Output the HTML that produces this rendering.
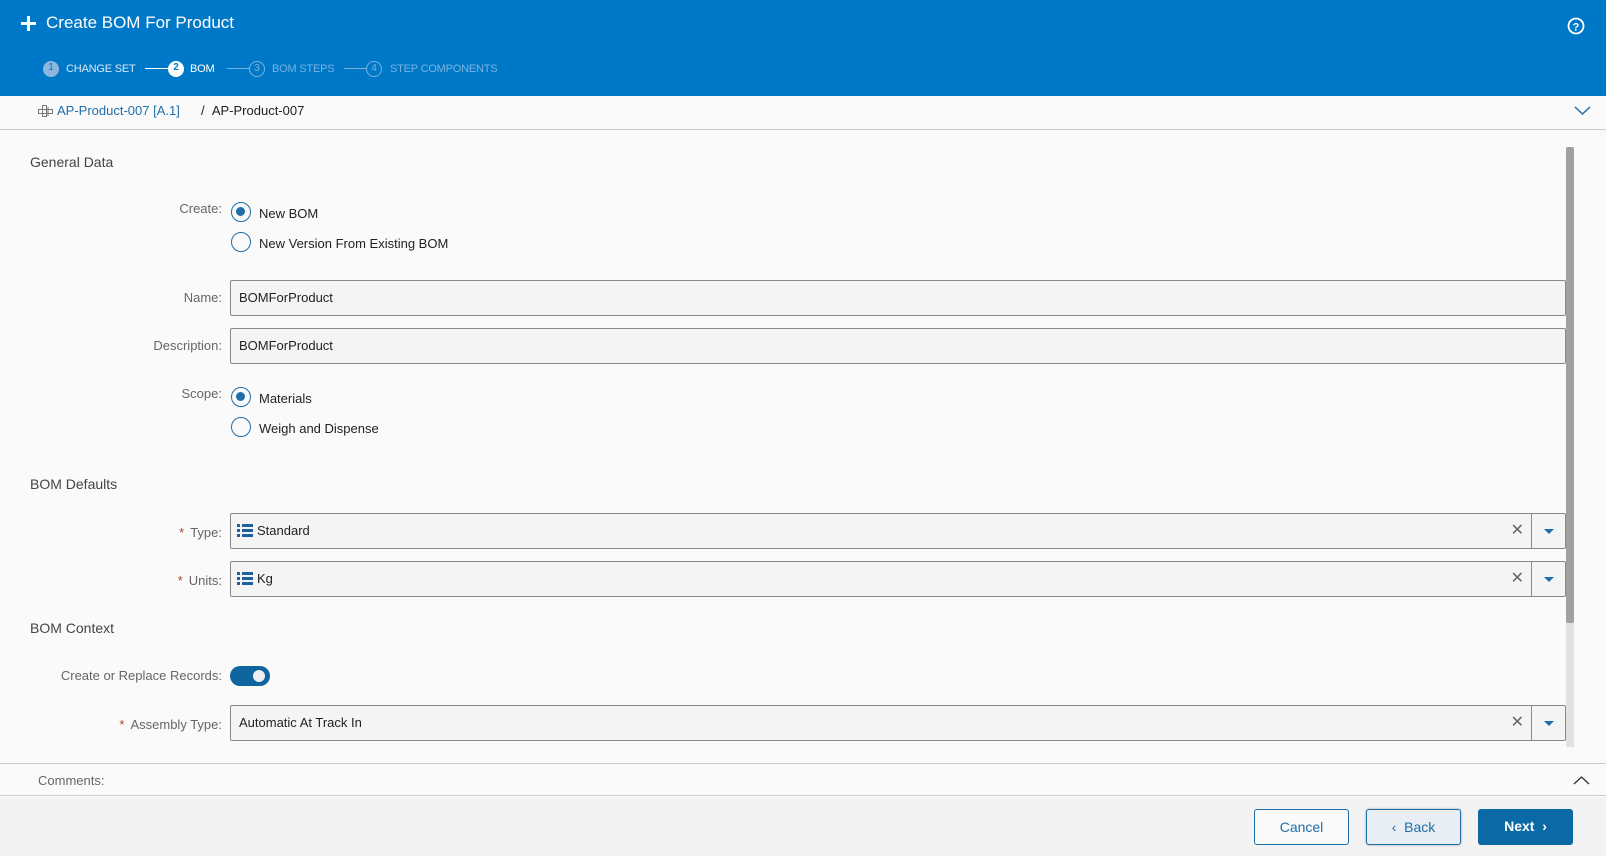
<!DOCTYPE html>
<html><head><meta charset="utf-8"><style>
*{box-sizing:border-box;margin:0;padding:0}
body{width:1606px;height:856px;overflow:hidden;background:#fafafa;font-family:"Liberation Sans",sans-serif;color:#333;position:relative}
.abs{position:absolute}
.hdr{left:0;top:0;width:1606px;height:96px;background:#0078c8;color:#fff}
.step{top:62px;font-size:11px;line-height:14px;white-space:nowrap;letter-spacing:-0.2px}
.circ{top:61px;width:16px;height:16px;border-radius:50%;font-size:10px;line-height:14px;text-align:center}
.ln{top:68px;height:1px}
.lbl{font-size:13px;color:#666;text-align:right;width:222px;left:0}
.sec{left:30px;font-size:14px;color:#444}
.inp{left:230px;width:1336px;height:36px;border:1px solid #8a8a8a;border-radius:2px;background:#f4f4f4;font-size:13px;color:#222;padding-left:8px;line-height:34px}
.radio{left:231px;width:20px;height:20px;border:1.5px solid #1f6ea8;border-radius:50%}
.radio.on::after{content:"";position:absolute;left:4px;top:4px;width:9px;height:9px;border-radius:50%;background:#1f6ea8}
.rt{left:259px;font-size:13px;color:#222}
.dd{position:absolute;right:0;top:0;width:34px;height:34px;border-left:1px solid #8a8a8a}
.dd::after{content:"";position:absolute;left:12px;top:15px;border-left:5px solid transparent;border-right:5px solid transparent;border-top:5px solid #1f6ea8}
.x{position:absolute;right:41px;top:0;font-size:16px;color:#666}
.req{color:#a0452a;margin-right:6px}
.btn{top:809px;width:95px;height:36px;border-radius:3px;font-size:14px;text-align:center;line-height:34px}
</style></head><body>
<div class="abs hdr">
 <div class="abs" style="left:21px;top:22px;width:15px;height:3px;background:#fff"></div>
 <div class="abs" style="left:27px;top:16px;width:3px;height:15px;background:#fff"></div>
 <div class="abs" style="left:46px;top:13px;font-size:17px">Create BOM For Product</div>
 <svg class="abs" style="left:1567px;top:17px" width="18" height="18" viewBox="0 0 18 18"><circle cx="9" cy="9" r="7.5" fill="none" stroke="#fff" stroke-width="1.8"/><text x="9" y="13.5" font-size="11" font-weight="bold" fill="#fff" text-anchor="middle" font-family="Liberation Sans">?</text></svg>
 <div class="abs circ" style="left:43px;background:#8fb6dc;color:#0078c8">1</div>
 <div class="abs step" style="left:66px;color:#d8e8f5">CHANGE SET</div>
 <div class="abs ln" style="left:145px;width:24px;background:#fff"></div>
 <div class="abs circ" style="left:168px;background:#fff;color:#0078c8;font-weight:bold">2</div>
 <div class="abs step" style="left:190px;color:#fff">BOM</div>
 <div class="abs ln" style="left:227px;width:22px;background:#79b2e0"></div>
 <div class="abs circ" style="left:249px;border:1px solid #79b2e0;color:#79b2e0">3</div>
 <div class="abs step" style="left:272px;color:#79b2e0">BOM STEPS</div>
 <div class="abs ln" style="left:344px;width:22px;background:#79b2e0"></div>
 <div class="abs circ" style="left:366px;border:1px solid #79b2e0;color:#79b2e0">4</div>
 <div class="abs step" style="left:390px;color:#79b2e0">STEP COMPONENTS</div>
</div>
<div class="abs" style="left:0;top:96px;width:1606px;height:34px;background:#fafafa;border-bottom:1px solid #ccc"></div>
<svg class="abs" style="left:37px;top:104px" width="17" height="14" viewBox="0 0 17 14"><g fill="none" stroke="#777" stroke-width="1"><rect x="1.5" y="5.5" width="14" height="4"/><rect x="5.5" y="1.5" width="4" height="11"/><line x1="11" y1="3" x2="11" y2="12"/></g></svg>
<div class="abs" style="left:57px;top:103px;font-size:13px;color:#1f6ea8">AP-Product-007 [A.1]</div>
<div class="abs" style="left:201px;top:103px;font-size:13px;color:#222">/&nbsp;&nbsp;AP-Product-007</div>
<svg class="abs" style="left:1574px;top:106px" width="17" height="10"><polyline points="1,1 8.5,8 16,1" fill="none" stroke="#1f6ea8" stroke-width="1.5"/></svg>
<div class="abs" style="left:1566px;top:147px;width:8px;height:600px;background:#e2e2e2"></div>
<div class="abs" style="left:1566px;top:147px;width:8px;height:476px;background:#a0a0a0;border-radius:2px"></div>

<div class="abs sec" style="top:154px">General Data</div>
<div class="abs lbl" style="top:201px">Create:</div>
<div class="abs radio on" style="top:202px"></div><div class="abs rt" style="top:206px">New BOM</div>
<div class="abs radio" style="top:232px"></div><div class="abs rt" style="top:236px">New Version From Existing BOM</div>
<div class="abs lbl" style="top:290px">Name:</div>
<div class="abs inp" style="top:280px">BOMForProduct</div>
<div class="abs lbl" style="top:338px">Description:</div>
<div class="abs inp" style="top:328px">BOMForProduct</div>
<div class="abs lbl" style="top:386px">Scope:</div>
<div class="abs radio on" style="top:387px"></div><div class="abs rt" style="top:391px">Materials</div>
<div class="abs radio" style="top:417px"></div><div class="abs rt" style="top:421px">Weigh and Dispense</div>

<div class="abs sec" style="top:476px">BOM Defaults</div>
<div class="abs lbl" style="top:525px"><span class="req">*</span>Type:</div>
<div class="abs inp" style="top:513px;padding-left:26px"><svg style="position:absolute;left:6px;top:10px" width="16" height="14"><g fill="#1f5fa0"><rect x="0" y="0" width="3" height="3"/><rect x="5" y="0" width="11" height="3"/><rect x="0" y="5" width="3" height="3"/><rect x="5" y="5" width="11" height="3"/><rect x="0" y="10" width="3" height="3"/><rect x="5" y="10" width="11" height="3"/></g></svg>Standard<span class="x">✕</span><span class="dd"></span></div>
<div class="abs lbl" style="top:573px"><span class="req">*</span>Units:</div>
<div class="abs inp" style="top:561px;padding-left:26px"><svg style="position:absolute;left:6px;top:10px" width="16" height="14"><g fill="#1f5fa0"><rect x="0" y="0" width="3" height="3"/><rect x="5" y="0" width="11" height="3"/><rect x="0" y="5" width="3" height="3"/><rect x="5" y="5" width="11" height="3"/><rect x="0" y="10" width="3" height="3"/><rect x="5" y="10" width="11" height="3"/></g></svg>Kg<span class="x">✕</span><span class="dd"></span></div>

<div class="abs sec" style="top:620px">BOM Context</div>
<div class="abs lbl" style="top:668px">Create or Replace Records:</div>
<div class="abs" style="left:230px;top:666px;width:40px;height:20px;border-radius:10px;background:#0f65a0"><div style="position:absolute;right:5px;top:4px;width:12px;height:12px;border-radius:50%;background:#f0f0f0"></div></div>
<div class="abs lbl" style="top:717px"><span class="req">*</span>Assembly Type:</div>
<div class="abs inp" style="top:705px">Automatic At Track In<span class="x">✕</span><span class="dd"></span></div>

<div class="abs" style="left:0;top:763px;width:1606px;height:33px;border-top:1px solid #ccc;border-bottom:1px solid #ccc;background:#fafafa"></div>
<div class="abs" style="left:38px;top:773px;font-size:13px;color:#666">Comments:</div>
<svg class="abs" style="left:1573px;top:775px" width="17" height="10"><polyline points="1,9 8.5,2 16,9" fill="none" stroke="#333" stroke-width="1.3"/></svg>
<div class="abs" style="left:0;top:797px;width:1606px;height:59px;background:#f3f3f3"></div>
<div class="abs btn" style="left:1254px;border:1px solid #1f6ea8;color:#1f6ea8;background:#fafafa">Cancel</div>
<div class="abs btn" style="left:1366px;border:1px solid #1f6ea8;color:#1f6ea8;background:#e8eef3;box-shadow:0 0 2px #999">‹&nbsp;&nbsp;Back</div>
<div class="abs btn" style="left:1478px;background:#0b6aa5;color:#fff;font-weight:bold">Next&nbsp;&nbsp;›</div>
</body></html>
